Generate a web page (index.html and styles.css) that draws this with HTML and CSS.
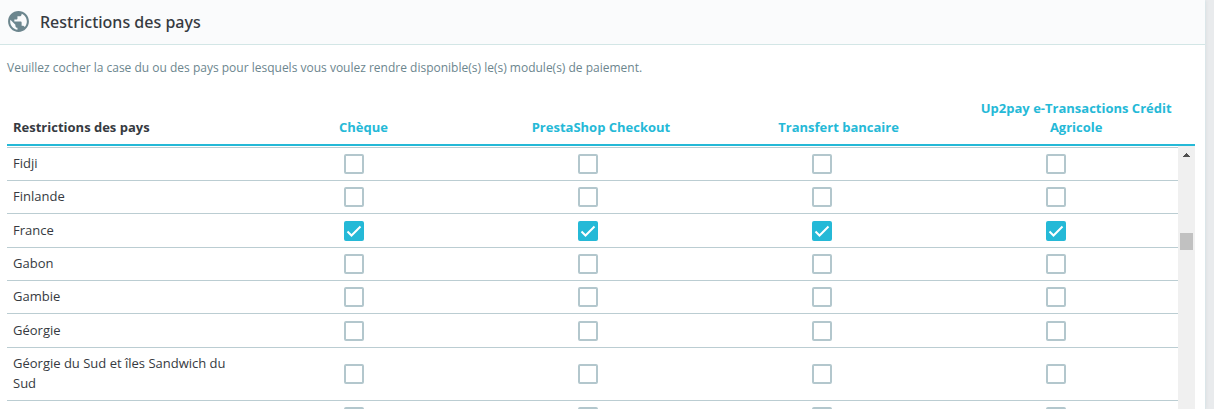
FILE: index.html
```
<!DOCTYPE html>
<html lang="fr">
<head>
    <meta charset="UTF-8">
    <meta name="viewport" content="width=device-width, initial-scale=1.0">
    <title>Restrictions des pays</title>
    <link rel="stylesheet" href="styles.css">
</head>
<body>

    <section class="card">
        <header class="card-header">
            <svg class="icon" viewBox="0 0 24 24" aria-hidden="true">
                <path d="M12 2C6.48 2 2 6.48 2 12s4.48 10 10 10 10-4.48 10-10S17.52 2 12 2zm-1 17.93c-3.95-.49-7-3.85-7-7.93 0-.62.08-1.21.21-1.79L9 15v1c0 1.1.9 2 2 2v1.93zm6.9-2.54c-.26-.81-1-1.39-1.9-1.39h-1v-3c0-.55-.45-1-1-1H8v-2h2c.55 0 1-.45 1-1V7h2c1.1 0 2-.9 2-2v-.41c2.93 1.19 5 4.06 5 7.41 0 2.08-.8 3.97-2.1 5.39z"/>
            </svg>
            <h1>Restrictions des pays</h1>
        </header>

        <div class="card-body">
            <p class="intro">Veuillez cocher la case du ou des pays pour lesquels vous voulez rendre disponible(s) le(s) module(s) de paiement.</p>

            <table class="table table-head">
                <thead>
                    <tr>
                        <th scope="col" class="name">Restrictions des pays</th>
                        <th scope="col"><a href="#cheque">Chèque</a></th>
                        <th scope="col"><a href="#checkout">PrestaShop Checkout</a></th>
                        <th scope="col"><a href="#transfert">Transfert bancaire</a></th>
                        <th scope="col"><a href="#up2pay">Up2pay e-Transactions Crédit Agricole</a></th>
                    </tr>
                </thead>
            </table>

            <div class="list">
                <table class="table table-list">
                    <tbody>
                        <tr>
                            <td>Fidji</td>
                            <td class="check"><input type="checkbox" aria-label="Fidji, Chèque"></td>
                            <td class="check"><input type="checkbox" aria-label="Fidji, PrestaShop Checkout"></td>
                            <td class="check"><input type="checkbox" aria-label="Fidji, Transfert bancaire"></td>
                            <td class="check"><input type="checkbox" aria-label="Fidji, Up2pay"></td>
                        </tr>
                        <tr>
                            <td>Finlande</td>
                            <td class="check"><input type="checkbox" aria-label="Finlande, Chèque"></td>
                            <td class="check"><input type="checkbox" aria-label="Finlande, PrestaShop Checkout"></td>
                            <td class="check"><input type="checkbox" aria-label="Finlande, Transfert bancaire"></td>
                            <td class="check"><input type="checkbox" aria-label="Finlande, Up2pay"></td>
                        </tr>
                        <tr>
                            <td>France</td>
                            <td class="check"><input type="checkbox" aria-label="France, Chèque" checked></td>
                            <td class="check"><input type="checkbox" aria-label="France, PrestaShop Checkout" checked></td>
                            <td class="check"><input type="checkbox" aria-label="France, Transfert bancaire" checked></td>
                            <td class="check"><input type="checkbox" aria-label="France, Up2pay" checked></td>
                        </tr>
                        <tr>
                            <td>Gabon</td>
                            <td class="check"><input type="checkbox" aria-label="Gabon, Chèque"></td>
                            <td class="check"><input type="checkbox" aria-label="Gabon, PrestaShop Checkout"></td>
                            <td class="check"><input type="checkbox" aria-label="Gabon, Transfert bancaire"></td>
                            <td class="check"><input type="checkbox" aria-label="Gabon, Up2pay"></td>
                        </tr>
                        <tr>
                            <td>Gambie</td>
                            <td class="check"><input type="checkbox" aria-label="Gambie, Chèque"></td>
                            <td class="check"><input type="checkbox" aria-label="Gambie, PrestaShop Checkout"></td>
                            <td class="check"><input type="checkbox" aria-label="Gambie, Transfert bancaire"></td>
                            <td class="check"><input type="checkbox" aria-label="Gambie, Up2pay"></td>
                        </tr>
                        <tr>
                            <td>Géorgie</td>
                            <td class="check"><input type="checkbox" aria-label="Géorgie, Chèque"></td>
                            <td class="check"><input type="checkbox" aria-label="Géorgie, PrestaShop Checkout"></td>
                            <td class="check"><input type="checkbox" aria-label="Géorgie, Transfert bancaire"></td>
                            <td class="check"><input type="checkbox" aria-label="Géorgie, Up2pay"></td>
                        </tr>
                        <tr>
                            <td>Géorgie du Sud et îles Sandwich du Sud</td>
                            <td class="check"><input type="checkbox" aria-label="Géorgie du Sud, Chèque"></td>
                            <td class="check"><input type="checkbox" aria-label="Géorgie du Sud, PrestaShop Checkout"></td>
                            <td class="check"><input type="checkbox" aria-label="Géorgie du Sud, Transfert bancaire"></td>
                            <td class="check"><input type="checkbox" aria-label="Géorgie du Sud, Up2pay"></td>
                        </tr>
                        <tr>
                            <td></td>
                            <td class="check"><input type="checkbox" aria-label="Chèque"></td>
                            <td class="check"><input type="checkbox" aria-label="PrestaShop Checkout"></td>
                            <td class="check"><input type="checkbox" aria-label="Transfert bancaire"></td>
                            <td class="check"><input type="checkbox" aria-label="Up2pay"></td>
                        </tr>
                    </tbody>
                </table>
                <div class="scrollbar" aria-hidden="true">
                    <svg class="arrow" viewBox="0 0 7 4" shape-rendering="crispEdges">
                        <path d="M3 0h1v1h1v1h1v1h1v1H0V3h1V2h1V1h1z"/>
                    </svg>
                    <div class="thumb"></div>
                </div>
            </div>
        </div>
    </section>

</body>
</html>
```

FILE: styles.css
```
* {
    box-sizing: border-box;
}
body {
    display: flex;
    height: 100vh;
    margin: 0;
    padding-right: 8px;
    overflow: hidden;
    background-color: #e9ebed;
    color: #363a41;
    font-family: "Open Sans", "Noto Sans", sans-serif;
    font-size: 13px;
    line-height: 20px;
}
.card {
    display: flex;
    flex-direction: column;
    flex: 1;
    min-width: 0;
    background-color: white;
    border-right: 1px solid #dbe6e9;
    border-top-right-radius: 2px;
    box-shadow: 0 0 4px rgba(0,0,0,0.06);
}
.card-header {
    display: flex;
    align-items: center;
    gap: 9px;
    height: 45px;
    padding: 0 6px 1px;
    background-color: #fafbfc;
    border-bottom: 1px solid #d3e6e6;
}
.card-header h1 {
    margin: 0;
    font-family: "Noto Sans", "Open Sans", sans-serif;
    font-size: 16px;
    font-weight: 500;
    line-height: 24px;
}
.icon {
    width: 25px;
    height: 25px;
    fill: #6c868e;
}
.card-body {
    display: flex;
    flex-direction: column;
    flex: 1;
    min-height: 0;
    padding: 13px 10px 0 7px;
}
.intro {
    margin: 0 0 21px;
    color: #6c868e;
    font-size: 12px;
}

/* Tables */
.table {
    width: 100%;
    table-layout: fixed;
    border-collapse: separate;
    border-spacing: 0;
}
.table-head th {
    padding: 0 6px 7px;
    border-bottom: 2px solid #25b9d7;
    font-weight: bold;
    line-height: 19px;
    text-align: center;
    vertical-align: bottom;
}
.table-head .name {
    text-align: left;
}
.table-head a {
    color: #25b9d7;
    text-decoration: none;
}
.list {
    display: flex;
    align-items: stretch;
    flex: 1;
    min-height: 0;
    overflow: hidden;
}
.table-list {
    flex: 1;
    align-self: flex-start;
    margin-top: 1px;
}
.table-list td {
    padding: 5px 6px 7px;
    border-top: 1px solid #bbcdd2;
}
.table-list .check {
    padding: 6px 15px 6px 6px;
    text-align: center;
}
/* Every third row is slightly taller */
.table-list tr:nth-child(3n) td {
    padding-top: 6px;
}
.table-list tr:nth-child(3n) .check {
    padding-top: 7px;
}
.check input {
    appearance: none;
    display: block;
    width: 20px;
    height: 20px;
    margin: 0 auto;
    border: 2px solid #b3c7cd;
    border-radius: 2px;
    background-color: white;
    cursor: pointer;
}
.check input:checked {
    border-color: #25b9d7;
    background: #25b9d7 url("data:image/svg+xml,%3Csvg xmlns='http://www.w3.org/2000/svg' viewBox='0 0 16 16'%3E%3Cpath d='M1.5 8.5l4 4 9-9' fill='none' stroke='white' stroke-width='2'/%3E%3C/svg%3E") center / 16px 16px no-repeat;
}

/* Scrollbar */
.scrollbar {
    display: flex;
    flex-direction: column;
    align-items: center;
    gap: 76px;
    width: 17px;
    padding-top: 7px;
    background-color: #f0f0f0;
}
.arrow {
    width: 7px;
    height: 4px;
    fill: #505050;
}
.thumb {
    width: 13px;
    height: 17px;
    background-color: #c1c1c1;
}
```
